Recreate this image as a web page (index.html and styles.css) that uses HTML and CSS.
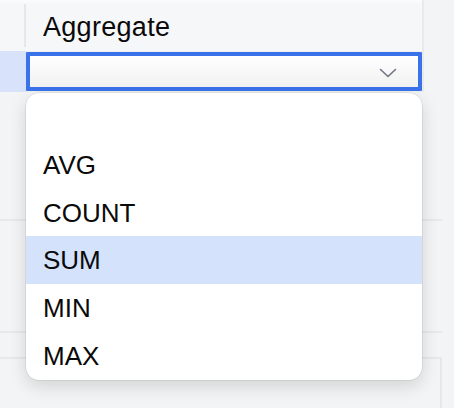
FILE: index.html
```html
<!DOCTYPE html>
<html>
<head>
<meta charset="utf-8">
<link rel="stylesheet" href="styles.css">
</head>
<body>
<div class="page">
  <div class="grid">
    <div class="strip"></div>
    <div class="header">
      <div class="hcell-left"><span class="divider"></span></div>
      <div class="hcell">Aggregate</div>
    </div>
    <div class="row">
      <div class="rcell-left"></div>
      <div class="select">
        <svg class="chev" width="18" height="10" viewBox="0 0 18 10"><path d="M1.5 1.5 L9 8.5 L16.5 1.5" fill="none" stroke="#6f7482" stroke-width="1.6" stroke-linecap="round" stroke-linejoin="round"/></svg>
      </div>
    </div>
  </div>
  <div class="rest">
    <div class="band band1"></div>
    <div class="band band2"></div>
    <div class="gap"></div>
    <div class="box"></div>
  </div>
  <div class="menu">
    <div class="item"></div>
    <div class="item">AVG</div>
    <div class="item">COUNT</div>
    <div class="item active">SUM</div>
    <div class="item">MIN</div>
    <div class="item">MAX</div>
  </div>
</div>
</body>
</html>
```
FILE: styles.css
```css
html, body {
  margin: 0;
  padding: 0;
}
body {
  background: #f3f4f5;
  font-family: "Liberation Sans", Arial, sans-serif;
  color: #0a0a0a;
}
.page {
  position: relative;
  width: 454px;
  height: 408px;
  overflow: hidden;
}
.grid {
  width: 424px;
  border-right: 2px solid #e9eaec;
  box-sizing: border-box;
  background: #f6f7f9;
}
.strip {
  height: 3px;
  background: #f9fafb;
}
.header {
  display: flex;
  height: 48px;
}
.hcell-left {
  width: 26px;
  display: flex;
  justify-content: flex-end;
  padding: 1px 0 4px;
  box-sizing: border-box;
}
.divider {
  width: 2px;
  background: #e6e7e9;
}
.hcell {
  flex: 1;
  padding-left: 17px;
  padding-top: 1px;
  font-size: 27px;
  letter-spacing: 0.3px;
  line-height: 47px;
}
.row {
  display: flex;
  height: 41px;
  background: #eff0f2;
}
.rcell-left {
  width: 26px;
  background: #d8e3fb;
}
.select {
  flex: 1;
  margin-top: 1px;
  height: 39px;
  box-sizing: border-box;
  border: 4px solid #3a72ea;
  border-radius: 1px;
  background: linear-gradient(#ffffff, #f1f1f1);
  display: flex;
  align-items: center;
  justify-content: flex-end;
  padding-right: 21px;
}
.chev {
  display: block;
  margin-top: 2px;
}
.rest {
  width: 442px;
}
.band {
  border-bottom: 2px solid #e7e8ea;
  box-sizing: border-box;
}
.band1 {
  height: 129px;
}
.band2 {
  height: 112px;
}
.gap {
  height: 24px;
}
.box {
  height: 60px;
  border-top: 2px solid #e7e8ea;
  border-right: 2px solid #e7e8ea;
}
.menu {
  position: absolute;
  left: 26px;
  top: 93px;
  width: 396px;
  background: #ffffff;
  border-radius: 13px;
  overflow: hidden;
  box-shadow: 0 0 0 0.5px rgba(0,0,0,0.12), 0 6px 18px rgba(0,0,0,0.14);
}
.item {
  height: 47.8px;
  line-height: 49px;
  padding-left: 17px;
  font-size: 26px;
  overflow: hidden;
}
.item.active {
  background: #d4e2fc;
}
```
